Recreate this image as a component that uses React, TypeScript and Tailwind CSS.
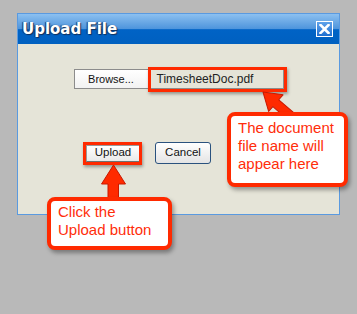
import React from 'react';

export default function UploadFileHelp() {
  return (
    <div className="relative w-[357px] h-[314px] overflow-hidden bg-[#b9b9b9] pt-[13px] pl-[17px] font-['Liberation_Sans',Arial,sans-serif]">
      {/* dialog */}
      <div className="w-[323px] h-[202px] border border-[#5a9ae0] bg-[#e5e4d8] flex flex-col">
        <div className="h-[30px] shrink-0 flex items-center justify-between pl-[4px] pr-[6px] bg-[linear-gradient(to_bottom,#8cc0f0_0%,#4d94dc_50%,#0063c6_52%,#0060c0_100%)]">
          <span className="font-['DejaVu_Sans',Verdana,sans-serif] font-bold text-[15px] text-white [text-shadow:1px_1px_1px_#12305a,-1px_0_1px_#12305a]">
            Upload File
          </span>
          <div className="w-[17px] h-[16px] border border-white bg-[linear-gradient(to_bottom,#5fa2ea,#1f6fd0)] flex items-center justify-center">
            <svg width="11" height="10" viewBox="0 0 11 10">
              <path d="M1.5 1 L9.5 9 M9.5 1 L1.5 9" stroke="white" strokeWidth="2.6" strokeLinecap="square" />
            </svg>
          </div>
        </div>

        <div className="flex justify-center mt-[25px]">
          <div className="flex h-[20px] border border-[#8c8c8c]">
            <div className="w-[74px] bg-[linear-gradient(to_bottom,#ffffff,#f2f2f2)] border-r border-[#c8c8c8] flex items-center justify-center text-[11px] text-[#111]">
              Browse...
            </div>
            <div className="w-[134px] flex items-center pl-[8px] text-[12px] text-[#222]">
              TimesheetDoc.pdf
            </div>
          </div>
        </div>

        <div className="flex items-center ml-[68px] mt-[53px] gap-[15px] h-[22px]">
          <div className="w-[54px] h-[17px] bg-[linear-gradient(to_bottom,#ffffff,#e9e9e9)] border border-[#9a9a9a] border-r-[#6f6f6f] border-b-[#6f6f6f] flex items-center justify-center text-[11.5px] text-[#111]">
            Upload
          </div>
          <div className="w-[56px] h-[22px] rounded-[3px] bg-[linear-gradient(to_bottom,#ffffff,#e4e4e4)] border border-[#2a527e] flex items-center justify-center text-[11.5px] text-[#111]">
            Cancel
          </div>
        </div>
      </div>

      {/* highlight boxes */}
      <div className="absolute left-[148px] top-[67px] w-[139px] h-[25px] border-[3px] border-[#ff2a00] shadow-[1px_2px_3px_rgba(0,0,0,0.35)]" />
      <div className="absolute left-[83px] top-[142px] w-[59px] h-[23px] border-[3px] border-[#ff2a00] shadow-[1px_2px_3px_rgba(0,0,0,0.35)]" />

      {/* arrows */}
      <svg className="absolute left-0 top-0 pointer-events-none" width="357" height="314" viewBox="0 0 357 314">
        <g transform="translate(263 92) rotate(-49)">
          <polygon points="0,0 -11,17 -4.5,17 -4.5,36 4.5,36 4.5,17 11,17" fill="#ff2a00" stroke="#c81800" strokeWidth="1" strokeLinejoin="round" />
        </g>
        <polygon points="113.5,165 101.5,184 108,184 108,202 118.5,202 118.5,184 125.5,184" fill="#ff2a00" stroke="#c81800" strokeWidth="1" strokeLinejoin="round" />
      </svg>

      {/* callouts */}
      <div className="absolute left-[227px] top-[112px] w-[121px] h-[75px] rounded-[8px] border-[4px] border-[#ff2a00] bg-white pl-[7px] pt-[3px] text-[15px] leading-[18px] text-[#ff2d0a] shadow-[2px_3px_4px_rgba(0,0,0,0.35)]">
        The document<br />file name will<br />appear here
      </div>
      <div className="absolute left-[47px] top-[197px] w-[125px] h-[53px] rounded-[8px] border-[4px] border-[#ff2a00] bg-white pl-[7px] pt-[2px] text-[15px] leading-[18px] text-[#ff2d0a] shadow-[2px_3px_4px_rgba(0,0,0,0.35)]">
        Click the<br />Upload button
      </div>
    </div>
  );
}
